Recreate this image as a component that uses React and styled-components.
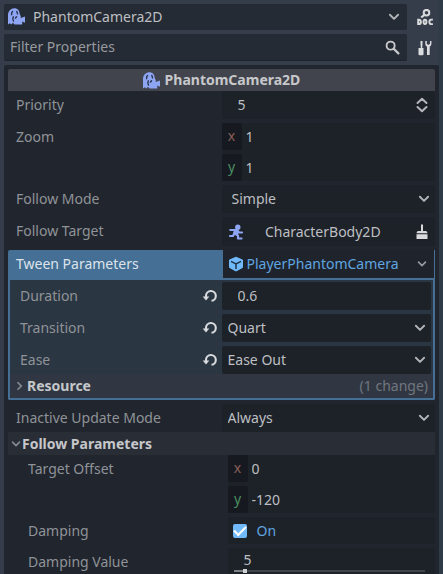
import React, { useId, useState } from "react";
import styled, { createGlobalStyle, css } from "styled-components";

const color = {
  base: "#363d4a",
  edge: "#2f3b46",
  bar: "#252b34",
  panel: "#21252e",
  field: "#1d2229",
  axis: "#161920",
  accent: "#456f94",
  nested: "#2b3643",
  link: "#5fa5e0",
  text: "#bdbfc2",
  label: "#8f9397",
};

const GlobalStyle = createGlobalStyle`
  * { box-sizing: border-box; }
  html { background: ${color.base}; }
  body { margin: 0; overflow: hidden; }
  body, button, input, select {
    font: 400 14px/20px "Noto Sans", sans-serif;
    color: ${color.text};
  }
`;

const bare = css`
  appearance: none;
  border: 0;
  margin: 0;
  padding: 0;
  background: transparent;
  outline: 0;
`;

const Dock = styled.main`
  display: flex;
  flex-direction: column;
  gap: 4px;
  min-height: 100vh;
  padding: 4px 4px 0;
  background: linear-gradient(to left, ${color.edge} 4px, ${color.base} 6px);
`;
const ToolbarRow = styled.div`
  display: flex;
  gap: 4px;
  height: ${(p) => (p.$tall ? 27 : 26)}px;
`;
const ToolbarField = styled.div`
  flex: 1;
  min-width: 0;
  display: flex;
  align-items: center;
  gap: 8px;
  padding: 0 7px 0 ${(p) => (p.$icon ? 4 : 6)}px;
  border-radius: 2px;
  background: ${color.bar};
  border-bottom: 1px solid ${(p) => (p.$icon ? color.bar : "#1e232b")};
`;
const ToolButton = styled.button`
  ${bare}
  width: 28px;
  display: grid;
  place-items: center;
`;
const NodeSelect = styled.select`
  ${bare}
  flex: 1;
  min-width: 0;
`;
const FilterInput = styled.input`
  ${bare}
  flex: 1;
  min-width: 0;
  &::placeholder { color: #969a9f; opacity: 1; }
`;
const Inspector = styled.section`
  flex: 1;
  display: flex;
  flex-direction: column;
  padding: 4px;
  border-radius: 2px 2px 0 0;
  background: ${color.panel};
`;
const Category = styled.h2`
  display: flex;
  align-items: center;
  justify-content: center;
  gap: 5px;
  height: 22px;
  margin: 0;
  border-radius: 2px 2px 0 0;
  background: #41444c;
  color: #c7c8cb;
  font-size: 14px;
  font-weight: 700;
`;
const List = styled.div`
  display: flex;
  flex-direction: column;
  gap: 4px;
  padding-left: ${(p) => (p.$indent ? 12 : 0)}px;
`;
const Row = styled.div`
  display: grid;
  grid-template-columns: minmax(0, 1fr) minmax(0, 1fr);
`;
const Name = styled.div`
  display: flex;
  align-items: center;
  justify-content: space-between;
  height: ${(p) => (p.$short ? 27 : 28)}px;
  padding: 0 4px 0 8px;
  color: ${color.label};
  white-space: nowrap;
`;
const Field = styled.div`
  min-width: 0;
  display: flex;
  align-items: center;
  height: ${(p) => (p.$tall ? 29 : 28)}px;
  padding: 0 5px 0 ${(p) => p.$inset ?? 6}px;
  border-radius: 2px;
  background: ${color.field};
`;
const Choice = styled.select`
  ${bare}
  flex: 1;
  min-width: 0;
`;
const TextInput = styled.input`
  ${bare}
  flex: 1;
  min-width: 0;
`;
const Vector = styled.div`
  display: flex;
  flex-direction: column;
  gap: 4px;
  border-radius: 2px;
  background: ${color.field};
`;
const Component = styled.div`
  display: flex;
  gap: 4px;
  height: 27px;
`;
const Axis = styled.label`
  width: 20px;
  line-height: 26px;
  text-align: center;
  border-radius: 2px;
  background: ${color.axis};
  color: ${(p) => (p.$axis === "x" ? "#8a5f57" : "#4c8f63")};
`;
const NodeButton = styled.button`
  ${bare}
  flex: 1;
  display: flex;
  align-items: center;
`;
const NodeName = styled.span`
  flex: 1;
  padding-right: 12px;
  text-align: center;
`;
const IconButton = styled.button`
  ${bare}
  display: grid;
  place-items: center;
`;
const TweenHeader = styled.div`
  display: grid;
  grid-template-columns: minmax(0, 1fr) minmax(0, 1fr);
  height: 30px;
  background: ${color.accent};
  border-radius: 2px 2px 0 0;
`;
const TweenName = styled.div`
  padding: 0 8px;
  line-height: 28px;
  color: #dce4eb;
`;
const ResourceField = styled.div`
  min-width: 0;
  display: flex;
  align-items: center;
  justify-content: space-between;
  margin: 0 0 2px 1px;
  padding: 0 7px 0 5px;
  border-right: 1px solid ${color.accent};
  background: #1f242c;
`;
const ResourceButton = styled.button`
  ${bare}
  display: flex;
  align-items: center;
  gap: 3px;
  color: ${color.link};
`;
const SubInspector = styled.div`
  border: solid ${color.accent};
  border-width: 0 2px 2px;
  border-radius: 0 0 2px 2px;
  background: ${color.nested};
`;
const NestedRows = styled(List)`
  padding: 2px 2px 0;
`;
const NestedSection = styled.div`
  padding: 0 2px;
  background: #303742;
`;
const Section = styled.button`
  ${bare}
  display: flex;
  align-items: center;
  width: 100%;
  height: ${(p) => (p.$sub ? 24 : 23)}px;
  gap: ${(p) => (p.$sub ? 2 : 1)}px;
  padding: 0 3px;
  background: ${(p) => (p.$sub ? "transparent" : "#292d36")};
  color: #c5c7ca;
  font-weight: 700;
`;
const Changes = styled.span`
  margin-left: auto;
  color: #71767f;
  font-weight: 400;
`;
const Tweens = styled.div`
  display: flex;
  flex-direction: column;
`;
const CheckLabel = styled.label`
  display: flex;
  align-items: center;
  gap: 10px;
  height: 27px;
  padding-left: 5px;
  border-radius: 2px;
  background: ${color.field};
  color: ${color.link};
`;
const CheckBox = styled.input`
  ${bare}
  width: 14px;
  height: 14px;
  border-radius: 2px;
  background: #70bafa;
  display: grid;
  place-items: center;
  &:checked::after {
    content: "";
    width: 10px;
    height: 5px;
    margin-top: -3px;
    border: solid #fff;
    border-width: 0 0 2px 2px;
    transform: rotate(-45deg);
  }
`;
const SliderField = styled.div`
  display: flex;
  flex-direction: column;
  height: 29px;
  padding: 3px 10px 0 6px;
  border-radius: 2px;
  background: ${color.field};
`;
const SliderValue = styled.input`
  ${bare}
  width: 100%;
  height: 18px;
  padding-left: 10px;
`;
const Slider = styled.input`
  ${bare}
  width: 100%;
  height: 4px;
  background: linear-gradient(to right, #7b7e82 6%, #404449 6%) center / 100% 2px no-repeat;
  &::-webkit-slider-thumb {
    appearance: none;
    width: 4px;
    height: 4px;
    background: #d0d1d3;
  }
`;

const Icon = ({ size = 16, children }) => (
  <svg width={size} height={size} viewBox="0 0 16 16" fill="none" aria-hidden="true">
    {children}
  </svg>
);
const PhantomIcon = () => (
  <Icon size={17}>
    <path
      fill="#8da5f3"
      d="M0 15.500V7C0 3 2.600.3 6 .3c3 0 4.800 2 5 5l1 2.400v1.700l4-1.500v6l-2.600-1.200v2.800H6.200L4.700 13.800 3.200 15.500 1.700 14.300Z"
    />
    <path
      d="M4.300 3.300c-1 .8-1.100 1.800-.9 3M8.300 3.200l.7 2.300M5 8.300c-.7 1.500-.7 2.800.2 4M7 9.500l1-1.300"
      stroke="#27304a"
      strokeWidth="1.300"
      strokeLinecap="round"
    />
  </Icon>
);
const ChevronDown = ({ size = 12, tone = "#b0b2b5" }) => (
  <Icon size={size}>
    <path d="m2.500 5 5.500 5.500L13.500 5" stroke={tone} strokeWidth="2.600" strokeLinecap="round" strokeLinejoin="round" />
  </Icon>
);
const ChevronRight = () => (
  <Icon size={10}>
    <path d="m4 2 6 6-6 6" stroke="#858a91" strokeWidth="2.800" />
  </Icon>
);
const SearchIcon = () => (
  <Icon size={15}>
    <circle cx="6" cy="6" r="4.300" stroke="#c8c9cb" strokeWidth="2" />
    <path d="m9.300 9.300 5 5" stroke="#c8c9cb" strokeWidth="2.400" strokeLinecap="round" />
  </Icon>
);
const DocIcon = () => (
  <Icon size={16}>
    <circle cx="9.500" cy="3.700" r="2.800" stroke="#d7d9db" strokeWidth="2" />
    <path d="m7.400 5.800-3.200 2.700" stroke="#d7d9db" strokeWidth="2.200" />
    <path
      d="M1.200 10.800V15h.8q1.900 0 1.900-2.100T2 10.800ZM8 10.700q-1.400 0-1.400 2.200T8 15t1.400-2.200T8 10.700ZM15.800 10.800q-3.400-.8-3.400 2.100t3.400 2.100"
      stroke="#d7d9db"
      strokeWidth="2"
    />
  </Icon>
);
const ToolsIcon = () => (
  <Icon size={16}>
    <path
      fill="#dcdde0"
      d="M3.500 1h2v3L5.200 8H6.500v6.200q0 1-1 1h-3q-1 0-1-1V8h2.300L3.500 4ZM8.300 1v3q0 1.900 1.700 2.700V15h2.700V6.700Q14.400 5.900 14.400 4V1H13v3l-1.600.8L9.800 4V1Z"
    />
  </Icon>
);
const StepperIcon = () => (
  <Icon size={16}>
    <path d="m3.500 6 4.500-4.300L12.500 6M3.500 10 8 14.300 12.500 10" stroke="#b4b6b9" strokeWidth="2" strokeLinecap="round" strokeLinejoin="round" />
  </Icon>
);
const RunnerIcon = () => (
  <Icon size={16}>
    <circle cx="9.800" cy="3.200" r="2.700" fill="#8da5f3" />
    <path d="M6 5h4l1 3-1.500 3L5 10Z" fill="#8da5f3" />
    <path
      d="M2.300 6h5M9 6l2 2.500h3M6.500 9 5 12H2M7.500 10l2.500 1.500v3h3.500"
      stroke="#8da5f3"
      strokeWidth="2.200"
      strokeLinecap="round"
      strokeLinejoin="round"
    />
  </Icon>
);
const BrushIcon = () => (
  <Icon size={16}>
    <path fill="#d8dadc" d="M7 .5h2v6.500h2.500q2 0 2 2.200h-11Q2.500 7 4.500 7H7ZM2.500 10.200h11V15h-11Z" />
  </Icon>
);
const CubeIcon = () => (
  <Icon size={16}>
    <path fill="#70bafa" stroke="#70bafa" strokeWidth="1" strokeLinejoin="round" d="M8 1.200 14.500 4v7.500L8 15l-6.500-3.500V4Z" />
    <path stroke="#1f3346" strokeWidth="1.500" d="M3 5.300 8 7.800l5-2.500M8 7.800V13" />
  </Icon>
);
const RevertIcon = () => (
  <Icon size={16}>
    <path d="M4 9.500V7.800a4.900 4.900 0 1 1 5.500 5" stroke="#d8dadd" strokeWidth="2.100" />
    <path fill="#d8dadd" d="M.7 8.500h6.600L4 12.500Z" />
  </Icon>
);

function RowName({ id, label, revert }) {
  return (
    <Name>
      <label htmlFor={id}>{label}</label>
      {revert && <IconButton aria-label={`Revert ${label}`}><RevertIcon /></IconButton>}
    </Name>
  );
}

function ChoiceRow({ label, value, revert, inset }) {
  const id = useId();
  return (
    <Row>
      <RowName id={id} label={label} revert={revert} />
      <Field $inset={inset}>
        <Choice id={id} defaultValue={value}><option>{value}</option></Choice>
        <ChevronDown />
      </Field>
    </Row>
  );
}

function NumberRow({ label, value, revert, stepper }) {
  const id = useId();
  return (
    <Row>
      <RowName id={id} label={label} revert={revert} />
      <Field $inset={16}>
        <TextInput id={id} defaultValue={value} />
        {stepper && <StepperIcon />}
      </Field>
    </Row>
  );
}

function VectorRow({ label, x, y }) {
  const id = useId();
  return (
    <Row role="group" aria-label={label}>
      <Name $short>{label}</Name>
      <Vector>
        {[["x", x], ["y", y]].map(([axis, value]) => (
          <Component key={axis}>
            <Axis $axis={axis} htmlFor={id + axis}>{axis}</Axis>
            <TextInput id={id + axis} defaultValue={value} />
          </Component>
        ))}
      </Vector>
    </Row>
  );
}

export default function App() {
  const [open, setOpen] = useState(true);
  return (
    <>
      <GlobalStyle />
      <Dock>
        <ToolbarRow>
          <ToolbarField $icon>
            <PhantomIcon />
            <NodeSelect aria-label="Edited node"><option>PhantomCamera2D</option></NodeSelect>
            <ChevronDown />
          </ToolbarField>
          <ToolButton aria-label="Open documentation"><DocIcon /></ToolButton>
        </ToolbarRow>
        <ToolbarRow $tall>
          <ToolbarField>
            <FilterInput aria-label="Filter Properties" placeholder="Filter Properties" />
            <SearchIcon />
          </ToolbarField>
          <ToolButton aria-label="Manage object properties"><ToolsIcon /></ToolButton>
        </ToolbarRow>
        <Inspector>
          <Category><PhantomIcon />PhantomCamera2D</Category>
          <List>
            <NumberRow label="Priority" value="5" stepper />
            <VectorRow label="Zoom" x="1" y="1" />
            <ChoiceRow label="Follow Mode" value="Simple" inset={10} />
            <Row>
              <Name>Follow Target</Name>
              <Field $tall>
                <NodeButton aria-label="Follow Target: CharacterBody2D"><RunnerIcon /><NodeName>CharacterBody2D</NodeName></NodeButton>
                <IconButton aria-label="Clear Follow Target"><BrushIcon /></IconButton>
              </Field>
            </Row>
            <Tweens>
              <TweenHeader>
                <TweenName>Tween Parameters</TweenName>
                <ResourceField>
                  <ResourceButton><CubeIcon />PlayerPhantomCamera</ResourceButton>
                  <IconButton aria-label="Resource options"><ChevronDown size={10} tone="#96999d" /></IconButton>
                </ResourceField>
              </TweenHeader>
              <SubInspector>
                <NestedRows>
                  <NumberRow label="Duration" value="0.6" revert />
                  <ChoiceRow label="Transition" value="Quart" revert />
                  <ChoiceRow label="Ease" value="Ease Out" revert />
                </NestedRows>
                <NestedSection>
                  <Section $sub aria-expanded="false"><ChevronRight />Resource<Changes>(1 change)</Changes></Section>
                </NestedSection>
              </SubInspector>
            </Tweens>
            <ChoiceRow label="Inactive Update Mode" value="Always" />
          </List>
          <Section aria-expanded={open} onClick={() => setOpen(!open)}><ChevronDown size={10} tone="#858a91" />Follow Parameters</Section>
          {open && (
            <List $indent>
              <VectorRow label="Target Offset" x="0" y="-120" />
              <Row>
                <Name $short as="label" htmlFor="damping">Damping</Name>
                <CheckLabel><CheckBox id="damping" type="checkbox" defaultChecked />On</CheckLabel>
              </Row>
              <Row>
                <Name $short as="label" htmlFor="damping-value">Damping Value</Name>
                <SliderField>
                  <SliderValue id="damping-value" defaultValue="5" />
                  <Slider type="range" aria-label="Damping Value slider" min="0" max="100" defaultValue="5" />
                </SliderField>
              </Row>
            </List>
          )}
        </Inspector>
      </Dock>
    </>
  );
}
